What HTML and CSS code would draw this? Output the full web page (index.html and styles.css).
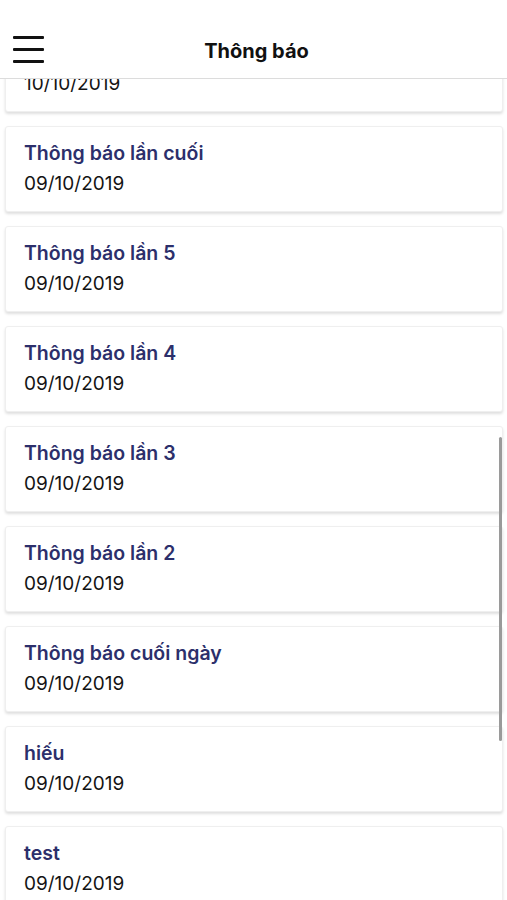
FILE: index.html
```html
<!DOCTYPE html>
<html lang="vi">

<head>
  <meta charset="UTF-8">
  <title>Thông báo</title>
  <meta name="viewport" content="width=device-width, initial-scale=1">
  <link rel="stylesheet" href="styles.css">
</head>

<body>
  <header class="topbar">
    <a class="menu-btn" title="menu">
      <span></span>
      <span></span>
      <span></span>
    </a>
    <h1>Thông báo</h1>
  </header>

  <main class="list-wrap">
    <div class="list">
      <div class="card">
        <div class="card-title">Thông báo lần 6</div>
        <div class="card-date">10/10/2019</div>
      </div>
      <div class="card">
        <div class="card-title">Thông báo lần cuối</div>
        <div class="card-date">09/10/2019</div>
      </div>
      <div class="card">
        <div class="card-title">Thông báo lần 5</div>
        <div class="card-date">09/10/2019</div>
      </div>
      <div class="card">
        <div class="card-title">Thông báo lần 4</div>
        <div class="card-date">09/10/2019</div>
      </div>
      <div class="card">
        <div class="card-title">Thông báo lần 3</div>
        <div class="card-date">09/10/2019</div>
      </div>
      <div class="card">
        <div class="card-title">Thông báo lần 2</div>
        <div class="card-date">09/10/2019</div>
      </div>
      <div class="card">
        <div class="card-title">Thông báo cuối ngày</div>
        <div class="card-date">09/10/2019</div>
      </div>
      <div class="card">
        <div class="card-title">hiếu</div>
        <div class="card-date">09/10/2019</div>
      </div>
      <div class="card">
        <div class="card-title">test</div>
        <div class="card-date">09/10/2019</div>
      </div>
    </div>
    <div class="scroll-thumb"></div>
  </main>
</body>

</html>
```

FILE: styles.css
```css
* {
  box-sizing: border-box;
}

html,
body {
  height: 100%;
}

body {
  margin: 0;
  background: #fff;
  font-family: Inter, "Liberation Sans", sans-serif;
  color: #111;
  display: flex;
  flex-direction: column;
  overflow: hidden;
}

.topbar {
  height: 79px;
  flex: none;
  display: flex;
  align-items: center;
  justify-content: center;
  position: relative;
  border-bottom: 1px solid #dcdcdc;
  padding-top: 24px;
  background: #fff;
  z-index: 2;
}

.topbar h1 {
  margin: 0 0 0 6px;
  font-size: 20px;
  font-weight: 700;
  color: #111;
}

.menu-btn {
  position: absolute;
  left: 13px;
  top: 36px;
  width: 31px;
  display: flex;
  flex-direction: column;
  gap: 9px;
}

.menu-btn span {
  display: block;
  height: 3px;
  background: #111;
  border-radius: 1px;
}

.list-wrap {
  flex: 1;
  overflow: hidden;
  position: relative;
}

.list {
  margin-top: -53px;
  padding: 0 4px 0 5px;
  display: flex;
  flex-direction: column;
  gap: 14px;
}

.card {
  height: 86px;
  padding: 15px 18px 0;
  background: #fff;
  border: 1px solid #efefef;
  border-radius: 3px;
  box-shadow: 0 2px 3px rgba(0, 0, 0, 0.13);
}

.card-title {
  font-size: 19.5px;
  font-weight: 600;
  color: #2c2f6b;
  line-height: 22px;
}

.card-date {
  margin-top: 9px;
  font-size: 19px;
  line-height: 22px;
  color: #141414;
}

.scroll-thumb {
  position: absolute;
  right: 5px;
  top: 358px;
  width: 3px;
  height: 304px;
  border-radius: 2px;
  background: #9a9a9a;
}
```
